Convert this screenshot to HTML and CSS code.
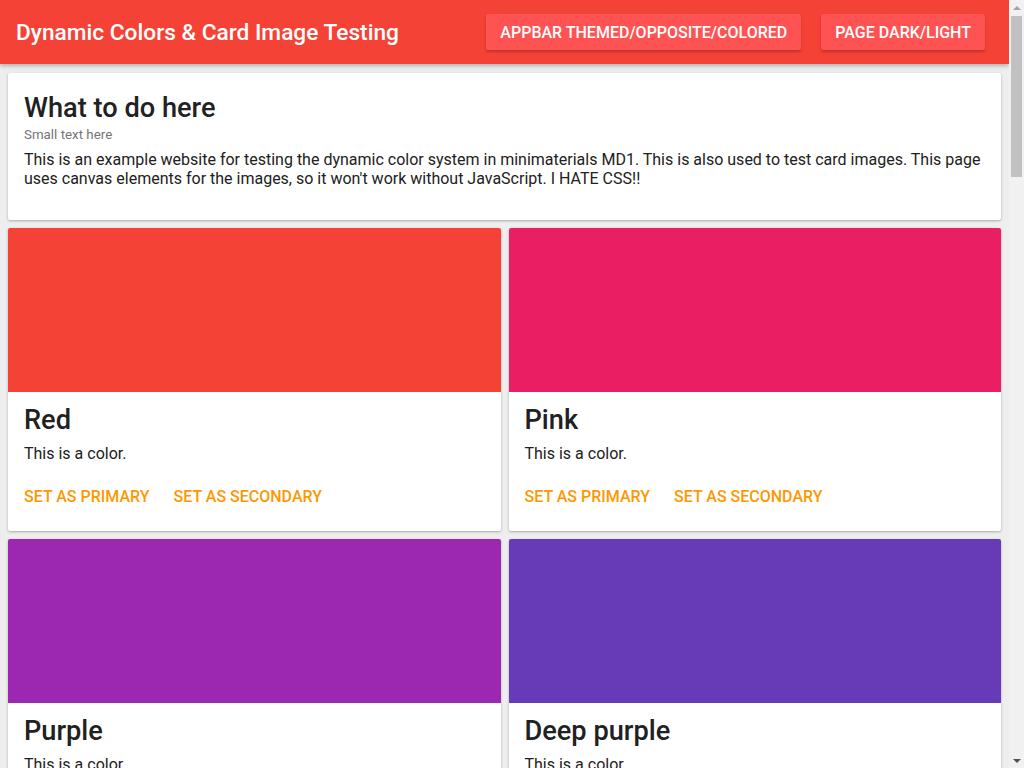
FILE: index.html
```html
<!DOCTYPE html>
<html lang="en">
<head>
<meta charset="utf-8">
<title>Dynamic Colors &amp; Card Image Testing</title>
<link rel="stylesheet" href="styles.css">
</head>
<body>
<div class="viewport">
<header class="appbar">
  <h1 class="appbar-title">Dynamic Colors &amp; Card Image Testing</h1>
  <div class="appbar-actions">
    <button class="raised-btn">Appbar themed/opposite/colored</button>
    <button class="raised-btn">Page dark/light</button>
  </div>
</header>
<main class="page">
  <section class="card intro">
    <h2 class="card-title">What to do here</h2>
    <div class="card-subtitle">Small text here</div>
    <p class="card-text">This is an example website for testing the dynamic color system in minimaterials MD1. This is also used to test card images. This page uses canvas elements for the images, so it won't work without JavaScript. I HATE CSS!!</p>
  </section>
  <div class="color-grid">
    <article class="card color-card">
      <div class="card-image red"></div>
      <div class="card-content"><h2 class="card-title">Red</h2><p class="card-text">This is a color.</p></div>
      <div class="card-actions"><button class="flat-btn">Set as primary</button><button class="flat-btn">Set as secondary</button></div>
    </article>
    <article class="card color-card">
      <div class="card-image pink"></div>
      <div class="card-content"><h2 class="card-title">Pink</h2><p class="card-text">This is a color.</p></div>
      <div class="card-actions"><button class="flat-btn">Set as primary</button><button class="flat-btn">Set as secondary</button></div>
    </article>
    <article class="card color-card">
      <div class="card-image purple"></div>
      <div class="card-content"><h2 class="card-title">Purple</h2><p class="card-text">This is a color.</p></div>
      <div class="card-actions"><button class="flat-btn">Set as primary</button><button class="flat-btn">Set as secondary</button></div>
    </article>
    <article class="card color-card">
      <div class="card-image deep-purple"></div>
      <div class="card-content"><h2 class="card-title">Deep purple</h2><p class="card-text">This is a color.</p></div>
      <div class="card-actions"><button class="flat-btn">Set as primary</button><button class="flat-btn">Set as secondary</button></div>
    </article>
    <article class="card color-card">
      <div class="card-image indigo"></div>
      <div class="card-content"><h2 class="card-title">Indigo</h2><p class="card-text">This is a color.</p></div>
      <div class="card-actions"><button class="flat-btn">Set as primary</button><button class="flat-btn">Set as secondary</button></div>
    </article>
    <article class="card color-card">
      <div class="card-image blue"></div>
      <div class="card-content"><h2 class="card-title">Blue</h2><p class="card-text">This is a color.</p></div>
      <div class="card-actions"><button class="flat-btn">Set as primary</button><button class="flat-btn">Set as secondary</button></div>
    </article>
  </div>
</main>
</div>
<div class="scrollbar" aria-hidden="true">
  <div class="sb-arrow"><span class="tri-up"></span></div>
  <div class="sb-track"><div class="sb-thumb"></div></div>
  <div class="sb-arrow"><span class="tri-down"></span></div>
</div>
</body>
</html>
```
FILE: styles.css
```css
* { box-sizing: border-box; }
html, body { margin: 0; padding: 0; height: 100%; overflow: hidden; }
body {
  display: flex;
  background: #eeeeee;
  font-family: Roboto, "Liberation Sans", Arial, sans-serif;
  color: #212121;
}
.viewport {
  flex: 1;
  min-width: 0;
  height: 100%;
  overflow: hidden;
}
.scrollbar {
  width: 15px;
  flex: none;
  height: 100%;
  background: #f1f1f1;
  display: flex;
  flex-direction: column;
}
.sb-arrow {
  height: 15px;
  display: flex;
  align-items: center;
  justify-content: center;
}
.tri-up {
  width: 0; height: 0;
  border-left: 4px solid transparent;
  border-right: 4px solid transparent;
  border-bottom: 4px solid #a3a3a3;
}
.tri-down {
  width: 0; height: 0;
  border-left: 4px solid transparent;
  border-right: 4px solid transparent;
  border-top: 4px solid #505050;
}
.sb-track { flex: 1; padding: 1px 2px 0; }
.sb-thumb {
  height: 161px;
  background: #c1c1c1;
}
.appbar {
  height: 64px;
  background: #f44336;
  display: flex;
  align-items: center;
  justify-content: space-between;
  padding: 0 24px 0 16px;
  box-shadow: 0 2px 4px rgba(0,0,0,0.25);
  position: relative;
  z-index: 1;
}
.appbar-title {
  margin: 0;
  font-size: 22.7px;
  font-weight: 500;
  color: #fff;
}
.appbar-actions { display: flex; gap: 20px; }
.raised-btn {
  height: 36px;
  padding: 0 14px;
  border: none;
  border-radius: 2px;
  background: #ff5252;
  color: #fff;
  font-family: inherit;
  font-size: 16px;
  font-weight: 500;
  text-transform: uppercase;
  box-shadow: 0 2px 3px rgba(0,0,0,0.22);
}
.page { padding: 9px 8px 8px; }
.card {
  background: #fff;
  border-radius: 2px;
  box-shadow: 0 1px 3px rgba(0,0,0,0.2), 0 1px 2px rgba(0,0,0,0.1);
  overflow: hidden;
}
.intro { padding: 19px 16px 16px; margin-bottom: 8px; }
.card-title { margin: 0; font-size: 27.2px; font-weight: 500; color: #212121; }
.card-subtitle { font-size: 13.33px; color: #757575; margin-top: 3px; }
.card-text { margin: 8px 0 0; font-size: 16px; }
.intro .card-text { margin-bottom: 16px; }
.color-grid {
  display: grid;
  grid-template-columns: 1fr 1fr;
  gap: 8px;
}
.card-image { aspect-ratio: 3 / 1; width: 100%; }
.red { background: #f44336; }
.pink { background: #e91e63; }
.purple { background: #9c27b0; }
.deep-purple { background: #673ab7; }
.indigo { background: #3f51b5; }
.blue { background: #2196f3; }
.card-content { padding: 12px 16px 0; }
.card-actions { padding: 15px 8px 17px; display: flex; gap: 8px; }
.flat-btn {
  height: 36px;
  padding: 0 8px;
  border: none;
  background: transparent;
  color: #ff9800;
  font-family: inherit;
  font-size: 16px;
  font-weight: 500;
  text-transform: uppercase;
}
```
